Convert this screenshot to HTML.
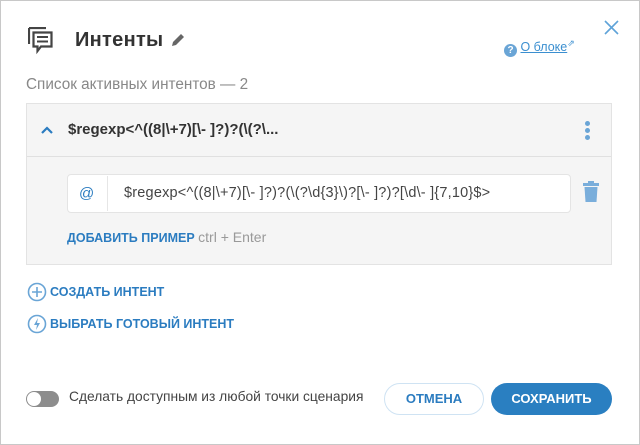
<!DOCTYPE html>
<html><head><meta charset="utf-8"><style>
*{box-sizing:border-box;margin:0;padding:0}
body{width:640px;height:445px;background:#fff;font-family:"Liberation Sans",sans-serif;position:relative;overflow:hidden}
.frame{position:absolute;left:0;top:0;width:640px;height:445px;border:1px solid #c8c8c8}
.abs{position:absolute;white-space:nowrap}
.title{left:75px;top:29px;font-size:20px;color:#333;font-weight:bold;letter-spacing:0.3px}
.sub{left:26px;top:76px;font-size:15.3px;color:#888}
.panel{left:26px;top:103px;width:586px;height:162px;background:#f5f5f5;border:1px solid #e3e3e3}
.hdr{left:0;top:0;width:584px;height:53px;border-bottom:1px solid #e0e0e0}
.blue{color:#2b7cc0}
.input{left:40px;top:70px;width:504px;height:39px;background:#fff;border:1px solid #e4e4e4;border-radius:4px}
.btn{border-radius:16px;height:32px;font-size:13px;font-weight:bold;text-align:center;line-height:30px}
</style></head><body>
<div class="frame"></div>
<svg class="abs" style="left:28px;top:27px" width="26" height="28" viewBox="0 0 26 28"><path d="M1 1v16M1 1h17" stroke="#444" stroke-width="2.2" fill="none"/><path d="M5.5 5.5h18v14H13l-3.5 4.5v-4.5h-4z" fill="none" stroke="#444" stroke-width="2.2"/><path d="M9 10h11M9 14.5h11" stroke="#444" stroke-width="2"/></svg>
<div class="abs title">Интенты</div>
<svg class="abs" style="left:170px;top:32px" width="16" height="16" viewBox="0 0 16 16"><path d="M2 14l1-4 8-8 3 3-8 8z" fill="#666"/></svg>
<div class="abs" style="left:504px;top:38px;font-size:12.5px"><span style="display:inline-block;width:13px;height:13px;border-radius:50%;background:#6aa5d6;color:#fff;font-size:10px;text-align:center;line-height:13px;font-weight:bold;vertical-align:-2px">?</span> <span style="color:#3b8fd0;text-decoration:underline">О блоке</span><sup style="color:#3b8fd0;font-size:9px">⇗</sup></div>
<svg class="abs" style="left:604px;top:20px" width="15" height="15" viewBox="0 0 15 15"><path d="M1 1l13 13M14 1L1 14" stroke="#5fa3d8" stroke-width="1.6"/></svg>
<div class="abs sub">Список активных интентов — 2</div>
<div class="abs panel">
 <div class="abs hdr">
  <svg class="abs" style="left:14px;top:22px" width="12" height="9" viewBox="0 0 12 9"><path d="M1 7l5-5 5 5" fill="none" stroke="#2b7cc0" stroke-width="2.2"/></svg>
  <div class="abs" style="left:41px;top:17px;font-size:15px;font-weight:bold;color:#333">$regexp&lt;^((8|\+7)[\- ]?)?(\(?\...</div>
  <div class="abs" style="left:558px;top:17px;width:5px;height:5px;border-radius:50%;background:#6aa5d6;box-shadow:0 7px 0 #6aa5d6,0 14px 0 #6aa5d6"></div>
 </div>
 <div class="abs input">
  <div class="abs blue" style="left:11px;top:10px;font-size:15px">@</div>
  <div class="abs" style="left:39px;top:1px;width:1px;height:35px;background:#e6e6e6"></div>
  <div class="abs" style="left:56px;top:10px;font-size:14.5px;color:#444;letter-spacing:0.2px">$regexp&lt;^((8|\+7)[\- ]?)?(\(?\d{3}\)?[\- ]?)?[\d\- ]{7,10}$&gt;</div>
 </div>
 <svg class="abs" style="left:556px;top:77px" width="16" height="22" viewBox="0 0 16 22"><rect x="0" y="2" width="16" height="3" fill="#7aaedb"/><rect x="5" y="0" width="6" height="3" fill="#7aaedb"/><path d="M1.5 6h13l-1 15h-11z" fill="#7aaedb"/></svg>
 <div class="abs" style="left:40px;top:125px;font-size:12.5px"><b class="blue">ДОБАВИТЬ ПРИМЕР</b> <span style="color:#999;font-size:14px">ctrl + Enter</span></div>
</div>
<svg class="abs" style="left:27px;top:282px" width="20" height="20" viewBox="0 0 20 20"><circle cx="10" cy="10" r="8.5" fill="none" stroke="#6aa5d6" stroke-width="1.6"/><path d="M10 5v10M5 10h10" stroke="#6aa5d6" stroke-width="1.6"/></svg>
<div class="abs blue" style="left:50px;top:285px;font-size:12.5px;font-weight:bold">СОЗДАТЬ ИНТЕНТ</div>
<svg class="abs" style="left:27px;top:314px" width="20" height="20" viewBox="0 0 20 20"><circle cx="10" cy="10" r="8.5" fill="none" stroke="#6aa5d6" stroke-width="1.6"/><path d="M11 4l-4 7h3l-1 5 4-7h-3z" fill="#6aa5d6"/></svg>
<div class="abs blue" style="left:50px;top:317px;font-size:12.5px;font-weight:bold">ВЫБРАТЬ ГОТОВЫЙ ИНТЕНТ</div>
<div class="abs" style="left:26px;top:391px;width:33px;height:16px;border-radius:8px;background:#8d8d8d"></div>
<div class="abs" style="left:27px;top:392px;width:14px;height:14px;border-radius:50%;background:#fff"></div>
<div class="abs" style="left:69px;top:389px;font-size:13.8px;color:#444">Сделать доступным из любой точки сценария</div>
<div class="abs btn blue" style="left:384px;top:383px;width:100px;border:1px solid #cfe3f3">ОТМЕНА</div>
<div class="abs btn" style="left:491px;top:383px;width:121px;background:#2a7fc1;color:#fff;line-height:32px">СОХРАНИТЬ</div>
</body></html>
